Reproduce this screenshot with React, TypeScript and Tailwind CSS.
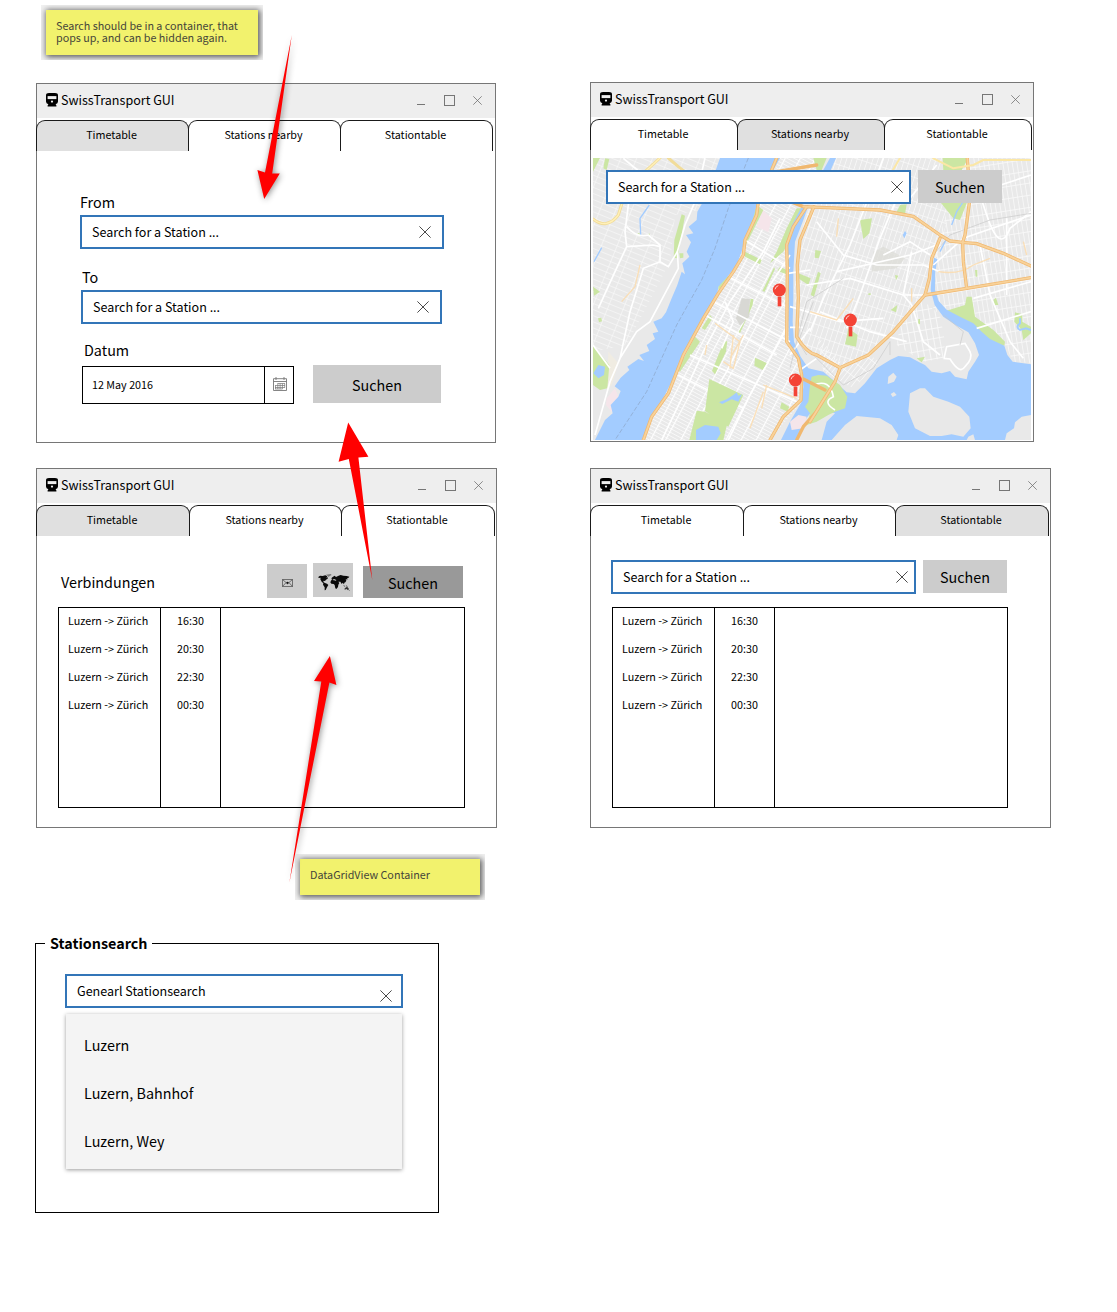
import type { ReactNode } from 'react';

const LINE = '#767676';

function Cross({ size, className = '' }: { size: number; className?: string }) {
  return (
    <svg width={size} height={size} viewBox="0 0 12 12" className={className}>
      <path d="M0.4 0.4L11.6 11.6M11.6 0.4L0.4 11.6" stroke="#4a4a4a" strokeWidth="1" fill="none" />
    </svg>
  );
}

function Train() {
  return (
    <svg width="12" height="14" viewBox="0 0 12 14" className="-mt-[2px]">
      <path d="M3 0H9Q12 0 12 2.4V8.6Q12 11 9.6 11.2L10.4 12.6V13.6H1.6V12.6L2.4 11.2Q0 11 0 8.6V2.4Q0 0 3 0Z" />
      <path d="M1.6 3.1H10.4V6.1H1.6Z" fill="#eeeeee" />
      <circle cx="6" cy="8.6" r="1.1" fill="#eeeeee" />
    </svg>
  );
}

function TitleBar() {
  return (
    <div className="flex h-[34px] items-center bg-[#eeeeee] pl-[9px] pr-[13px]">
      <Train />
      <span className="-mt-[2px] ml-[3px] text-[12.55px] leading-[34px]">SwissTransport GUI</span>
      <div className="-mt-[2px] ml-auto flex items-center">
        <svg width="8" height="12" viewBox="0 0 8 12">
          <path d="M0 10.5H8" stroke={LINE} />
        </svg>
        <svg width="11" height="11" viewBox="0 0 11 11" className="ml-[19px]">
          <rect x="0.5" y="0.5" width="10" height="10" stroke={LINE} fill="none" />
        </svg>
        <Cross size={9} className="ml-[18px] opacity-80" />
      </div>
    </div>
  );
}

const tabNames = ['Timetable', 'Stations nearby', 'Stationtable'];

function Tabs({ active, columns }: { active: number; columns: string }) {
  return (
    <div className={`-ml-px mt-[2px] grid h-[31px] ${columns}`}>
      {tabNames.map((name, i) => (
        <div
          key={name}
          className={`-mr-px rounded-t-[9px] border-x border-t border-[#1a1a1a] pr-[2px] text-center text-[10.75px] leading-[27px] ${
            i === active ? 'bg-[#e0e0e0]' : 'bg-white'
          }`}
        >
          {name}
        </div>
      ))}
    </div>
  );
}

function Window({
  className,
  active,
  columns,
  children,
}: {
  className: string;
  active: number;
  columns: string;
  children: ReactNode;
}) {
  return (
    <section className={`h-[360px] shrink-0 border border-[#767676] bg-white ${className}`}>
      <TitleBar />
      <Tabs active={active} columns={columns} />
      {children}
    </section>
  );
}

function SearchBox({
  className,
  text = 'Search for a Station ...',
  cross = '',
}: {
  className: string;
  text?: string;
  cross?: string;
}) {
  return (
    <div
      className={`flex h-[34px] items-center justify-between border-2 border-[#3275b8] bg-white pl-[10px] text-[12.55px] leading-[30px] ${className}`}
    >
      <span>{text}</span>
      <Cross size={12} className={`-mt-px ${cross}`} />
    </div>
  );
}

function Button({ className, children }: { className: string; children: ReactNode }) {
  return <div className={`flex items-center justify-center text-[14.35px] ${className}`}>{children}</div>;
}

function Note({ className, children }: { className: string; children: ReactNode }) {
  return (
    <div className={`overflow-hidden bg-[#f1f1f1] p-[5px] ${className}`}>
      <div className="h-full bg-[#f2f26d] pl-[10px] pt-[10px] text-[10.75px] leading-[12px] text-[#45453a] shadow-[1px_1px_6px_1px_rgba(0,0,0,0.65)]">
        {children}
      </div>
    </div>
  );
}

const times = ['16:30', '20:30', '22:30', '00:30'];

function Connections({ className }: { className: string }) {
  return (
    <div className={`grid h-[201px] grid-cols-[102px_60px_1fr] border border-black text-[10.75px] leading-[28px] ${className}`}>
      <div className="border-r border-black pl-[9px]">
        <div className="-mt-px">
          {times.map((t) => (
            <div key={t}>Luzern -&gt; Zürich</div>
          ))}
        </div>
      </div>
      <div className="border-r border-black text-center">
        <div className="-mt-px">
          {times.map((t) => (
            <div key={t}>{t}</div>
          ))}
        </div>
      </div>
      <div />
    </div>
  );
}

function Calendar() {
  return (
    <svg width="14" height="14" viewBox="0 0 14 14" fill="none" stroke="#777" strokeWidth="0.9" className="-mt-[2px] ml-px">
      <path d="M0.5 1.7H13.5V13.5H0.5ZM0.5 4.5H13.5M3 0V3M11 0V3" />
      <path d="M4.5 6.5H12M2 8.5H12M2 10.5H12M2 12H9.5M2.5 8.5V12M4.8 6.5V12M7.1 6.5V12M9.4 6.5V12M11.7 6.5V10.5" strokeWidth="0.7" />
    </svg>
  );
}

function Envelope() {
  return (
    <svg width="11" height="8" viewBox="0 0 11 8" fill="none" stroke="#333">
      <path d="M0.5 0.5H10.5V7.5H0.5ZM0.5 0.5L5.5 4.8L10.5 0.5M0.5 7.5L4 3.6M10.5 7.5L7 3.6" strokeWidth="0.6" />
      <circle cx="5.5" cy="3.8" r="1.1" fill="#111" stroke="none" />
    </svg>
  );
}

function WorldMap() {
  return (
    <svg width="32" height="17" viewBox="0 0 96 51" fill="#0a0a0a" className="ml-[2px]">
      <path d="M1 9L6 5L14 6L22 4L28 7L25 11L30 10L29 14L24 17L21 21L17 20L16 24L21 27L27 29L31 33L27 40L23 48L20 49L20 40L15 32L16 28L11 23L7 16L8 11L2 12Z" />
      <path d="M24 2L38 0L41 3L35 6L32 9L29 6Z" fill="#777" />
      <path d="M39 20L42 16L40 13L44 9L50 5L54 9L60 6L68 3L76 5L86 6L94 8L92 11L88 12L88 17L83 15L85 20L82 25L79 26L78 31L74 26L71 30L67 23L61 23L64 27L61 32L60 39L55 45L52 43L50 33L47 30L40 29L37 25Z" />
      <path d="M43 18L48 15L55 18L54 20L48 19Z" fill="#ccc" />
      <path d="M76 33L80 35L82 38L78 37ZM83 32L86 35L90 37L86 38ZM80 43L86 39L89 40L93 45L90 49L86 45L80 47ZM94 48L96 49L92 51Z" opacity="0.8" />
    </svg>
  );
}

/* City map: Hudson on the left, Manhattan in the middle, East River and bay on the right. */
function CityMap() {
  const pins = [
    [568, 405],
    [781, 495],
    [616, 675],
  ];
  return (
    <svg viewBox="9 9 1314 846" preserveAspectRatio="none" className="absolute inset-0 h-full w-full">
      <defs>
        <pattern id="jersey" width="44" height="17" patternUnits="userSpaceOnUse" patternTransform="rotate(22)">
          <path d="M0 1H44M1 0V17" stroke="#f8f8f8" strokeWidth="2.2" />
        </pattern>
        <pattern id="manhattan" width="40" height="10" patternUnits="userSpaceOnUse" patternTransform="rotate(28)">
          <path d="M0 1H40" stroke="#f9f9f9" strokeWidth="2.8" />
          <path d="M1 0V10" stroke="#fff" strokeWidth="5" />
        </pattern>
        <pattern id="bronx" width="15" height="34" patternUnits="userSpaceOnUse" patternTransform="rotate(18)">
          <path d="M0 1H15M1 0V34" stroke="#fafafa" strokeWidth="2.4" />
        </pattern>
        <pattern id="east" width="14" height="36" patternUnits="userSpaceOnUse" patternTransform="rotate(-9)">
          <path d="M0 1H14M1 0V36" stroke="#fbfbfb" strokeWidth="2.6" />
        </pattern>
        <pattern id="point" width="18" height="30" patternUnits="userSpaceOnUse" patternTransform="rotate(-10)">
          <path d="M0 1H18M1 0V30" stroke="#fafafa" strokeWidth="3" />
        </pattern>
        <pattern id="south" width="12" height="36" patternUnits="userSpaceOnUse" patternTransform="rotate(38)">
          <path d="M0 1H12M1 0V36" stroke="#fafafa" strokeWidth="2.4" />
        </pattern>
      </defs>
      <rect x="9" y="9" width="1314" height="846" fill="#e9e9e9" />

      {/* street grids */}
      <path d="M9 9H390L325 165L255 180L240 320L110 570L9 590Z" fill="url(#jersey)" />
      <path d="M570 9H700L600 200V560L635 640V740L540 855H155L240 690L370 440L490 190Z" fill="url(#manhattan)" />
      <path d="M720 9H1120L1060 240L1010 420L900 530L830 600L750 640L640 570L610 420L640 200Z" fill="url(#bronx)" />
      <path d="M1120 9H1323V330V625L1270 620L1240 560L1130 470H1030L1030 300Z" fill="url(#east)" />
      <path d="M990 430L1050 480L1065 560L1060 610L1000 620L920 570L930 510Z" fill="url(#point)" />
      <path d="M680 540L750 620L840 600L870 620L790 700L700 650Z" fill="url(#south)" />

      {/* faint districts */}
      <path d="M850 290L880 275L945 310L920 340L845 350Z" fill="#dcdcd6" opacity="0.7" />
      <path d="M518 165L545 190L535 232L500 215Z" fill="#f5e5ea" />
      <path d="M50 730L75 700L85 725L65 770L48 750Z" fill="#f5e5ea" />
      <path d="M55 590L85 625L65 690L50 700Z" fill="#f0ece2" />
      <path d="M455 430L480 432L478 485L450 512L438 490Z" fill="#d8d8d4" />

      {/* green areas */}
      <g fill="#cbe6a3">
        <path d="M9 9H30L9 50ZM45 10L58 12L50 45L40 40Z" />
        <path d="M275 178L285 182L262 310L251 308L253 255Z" />
        <path d="M9 570L58 630L52 700L30 705L9 690ZM9 395L30 410L12 422Z" />
        <path d="M24 490L34 488L36 499L27 502ZM140 238L148 233L150 242ZM172 240L178 235L180 242ZM268 295L280 295V308L270 310Z" />
        <path d="M495 608L532 625L518 645L493 632ZM465 290L515 315L510 328L465 305Z" />
        <path d="M552 337L517 408L524 410L555 342ZM482 432L490 432L488 450L450 535L446 530L475 480Z" />
        <path d="M402 560L412 558L408 590L375 658L366 648L385 600Z" />
        <path d="M385 385L400 360L425 368L385 405ZM500 150L520 165L465 275L470 235ZM360 480L368 490L345 525L335 520Z" />
        <path d="M315 545L330 560L270 650L262 645Z" />
        <path d="M620 160L640 160L615 225L580 290L540 325L560 290L590 220Z" />
        <path d="M575 742L598 755L592 770L570 760ZM570 335L590 345V358L562 348ZM625 355L662 370L655 390L628 372Z" />
        <path d="M810 195L846 190L838 235L820 252ZM662 420L684 350L692 355L672 425ZM676 285L693 288L686 310L674 308Z" />
        <path d="M1058 9H1135L1110 55L1060 50ZM1050 140H1132L1110 195L1090 190ZM930 150L950 148L945 178L920 170Z" />
        <path d="M1130 425H1145L1155 485L1210 525L1245 560L1243 572L1170 555L1140 510L1060 470L1125 450Z" />
        <path d="M775 520L803 540L798 575L765 568ZM902 465L922 450L918 472ZM1275 472L1297 478V500L1323 515V535L1300 555L1295 525L1273 500Z" />
        <path d="M1290 745L1310 735L1323 745V775L1300 778ZM980 610L1005 605L995 622ZM1155 345L1162 345V365H1157ZM1210 435L1218 428L1225 450H1214Z" />
        <path d="M985 492L990 492V508L984 506ZM835 415H842V420H835ZM915 360L925 362L918 376ZM670 9H710L695 45H680Z" />
      </g>

      {/* water */}
      <g fill="#a3ccff">
        <path d="M390 9H570L540 62L500 150L490 188L465 250L455 290L440 330L415 362L385 395L380 430L350 480L320 530L295 580L265 640L235 700L215 740L180 800L155 855H15L45 795L68 775L62 750L85 725L92 708L74 694L92 668L118 645L112 635L145 612L162 618L148 600L178 588L170 570L195 552L188 535L205 530L190 500L215 490L228 472L245 430L262 390L275 350L285 358L277 325L298 305L290 290L303 262L288 240L310 235L296 215L320 195L322 170L345 130L372 60Z" />
        <path d="M700 45L720 9H738L718 55ZM638 150H656L640 195L615 260L610 350V430L608 500L612 560L632 605L655 640L700 650L735 680L770 712L795 715L825 685L860 640L900 615L925 603L960 607L985 620L1005 630L1025 650L1055 655L1080 648L1095 665L1130 673L1135 650L1155 620L1167 600L1155 565L1135 532L1100 512L1060 485L1034 450L1022 405L1026 350L1032 308L1042 312L1036 350L1035 405L1046 438L1070 464L1110 485L1150 505L1175 530L1200 552L1243 572L1252 600L1268 620L1323 628V780L1295 785L1275 802L1272 820L1250 835L1245 855H573L600 800L635 740L640 695L638 650L620 610L597 570L595 500L596 430L590 350L590 270L603 215Z" />
        <path d="M10 655L25 630L45 635L42 660L25 670ZM938 240L945 228L950 235L943 250Z" />
      </g>
      <path d="M1290 490V505Q1275 515 1290 525L1308 520L1323 525" stroke="#a3ccff" strokeWidth="6" fill="none" />
      <path d="M152 240L150 190L178 150M12 320L35 278M1085 210L1100 170L1120 140M1070 250L1050 290" stroke="#a3ccff" strokeWidth="4" fill="none" />
      <path d="M475 9L415 160L375 280L335 375L260 510L170 710L75 855" stroke="#8ba3c4" strokeWidth="2" strokeDasharray="14 6" fill="none" />

      {/* islands */}
      <g fill="#e8e8e8">
        <path d="M960 715L990 700H1005L1030 725L1075 740L1110 755L1138 785L1142 820L1120 845L1085 838L1055 843H1020L975 820L955 770Z" />
        <path d="M895 665L910 653L920 665L912 680L893 687ZM902 717L912 711L920 720L908 726Z" />
        <path d="M725 855L765 810L800 783L870 790L905 810L925 840L920 855ZM1135 845L1150 838L1155 855H1130Z" />
        <path d="M665 770L720 770L735 775L710 800L695 855H620L640 800Z" />
      </g>
      <path d="M600 800L625 780L650 785L640 820L605 825Z" fill="#f5e5ea" />
      <path d="M660 690L665 665L685 660L710 662L750 690L772 725L765 760L735 770L715 780L680 800L650 810L660 775L645 755L655 740Z" fill="#cbe6a3" />

      {/* secondary streets */}
      <g stroke="#fff" fill="none" strokeWidth="5">
        <path d="M120 110L105 230L110 275L75 350L25 460M110 215Q140 250 175 240L210 270V320L235 335L262 290M210 275L190 270L110 275" />
        <path d="M345 9L315 140L285 210L262 290L265 340L220 425L180 500L140 530L90 610L60 680L15 840M210 320L160 340L120 470L90 610M9 570L60 640M100 10L160 60L345 85" />
        <path d="M570 190L520 290L420 440L340 590L280 720L215 855M600 300L540 390L410 650L320 800M590 520L480 720L415 855M405 440L430 500L395 580" />
        <path d="M465 255L600 340M370 440L600 560M345 480L560 600M300 600L620 740M415 365L590 455M265 660L460 760M600 600L660 520M595 355L660 345M600 455L670 475M600 517L640 517M630 645L680 610" />
        <path d="M880 9L835 130L780 270L700 430L660 530M950 60L870 250L810 420L770 520M1040 30L960 130M680 200L760 300L860 330L1000 330L1050 350M650 390L780 370L940 420L1010 420" />
        <path d="M740 350L960 300L1040 270M690 470L840 530L950 560M965 290L940 420L965 450M880 300L960 260L1020 300M650 470L750 500L880 490M1030 330L1120 250L1323 180M1040 100L1140 120L1323 60" />
        <path d="M1190 180Q1230 300 1260 220L1323 170M1190 180L1160 90L1120 60M1250 190V420M1170 270L1200 420L1260 560L1300 610M1150 430L1323 380M1160 520L1323 470" />
        <path d="M1060 610L1080 612Q1110 660 1125 635Q1150 610 1140 590L1125 565L1070 575L1062 610M965 450L1000 560L1050 600" />
        <path d="M670 690Q720 670 730 725Q695 740 735 765" />
      </g>
      <g stroke="#c9c9c9" fill="none" strokeWidth="2.5">
        <path d="M600 640L650 440L760 370M1323 175L1200 195L1080 240L1030 300M645 575L760 690L850 640L900 560V600M650 600L625 560L670 440M1060 480L1120 530L1110 570" opacity="0.8" />
      </g>
      <g stroke="#fbdcae" fill="none" strokeWidth="4" opacity="0.85">
        <path d="M150 330L135 395L95 440M375 505L450 560L430 640L400 620M430 540L420 640M520 690L620 730M520 710L480 820M530 690L515 760M745 190L740 245M660 470L740 495L790 430M965 400V440M1045 350Q1110 360 1150 330L1200 310M1300 260L1310 300M460 540L420 610M350 570L345 600" />
      </g>

      {/* Central Park */}
      <path d="M358 672L460 720L415 815L345 768ZM320 767L345 770L412 805L400 855H298Z" fill="#cbe6a3" />
      <path
        d="M318 825L345 810L385 815L392 835L380 855H318ZM387 742L410 733L430 720L440 712L445 722L456 718L445 740L425 733L397 747Z"
        fill="#a3ccff"
      />

      {/* motorways */}
      <g fill="none" strokeLinejoin="round" strokeLinecap="round">
        <path d="M9 192Q50 225 85 180L110 100L165 50L210 9M235 9L265 35L350 100" stroke="#f1dc9a" strokeWidth="9" />
        <path d="M9 192Q50 225 85 180L110 100L165 50L210 9" stroke="#fff0b8" strokeWidth="4" />
        <g stroke="#f0b870" strokeWidth="10">
          <path d="M560 9L505 140L500 180L465 255L460 300L430 350L385 415L340 490L280 600L235 715L185 785L160 855" />
          <path d="M650 155L610 215L590 270L592 350L590 560L625 610L635 660L633 735L580 785L540 855" />
          <path d="M672 155L630 255L622 330L625 430L620 545Q650 595 680 600L750 638" />
          <path d="M500 100L640 155L760 160L870 165L970 184L1050 240L1080 258L1118 262L1160 266L1240 295L1323 333" />
          <path d="M750 638L835 600L910 530L970 460L1005 420L1130 400L1323 368" />
          <path d="M1132 9L1140 130L1125 240L1118 262L1120 320L1130 400M1050 250L1025 310L1018 370L1005 420M750 640L735 680L710 720L660 800M640 672L705 705" />
          <path d="M620 855L640 815L675 775M520 100L560 50L680 30" />
        </g>
        <g stroke="#f8d29a" strokeWidth="5.5">
          <path d="M560 9L505 140L500 180L465 255L460 300L430 350L385 415L340 490L280 600L235 715L185 785L160 855" />
          <path d="M650 155L610 215L590 270L592 350L590 560L625 610L635 660L633 735L580 785L540 855" />
          <path d="M672 155L630 255L622 330L625 430L620 545Q650 595 680 600L750 638" />
          <path d="M640 155L760 160L870 165L970 184L1050 240L1080 258L1118 262L1160 266L1240 295L1323 333" />
          <path d="M750 638L835 600L910 530L970 460L1005 420L1130 400L1323 368M1132 9L1140 130L1125 240L1118 262L1120 320L1130 400M1050 250L1025 310L1018 370L1005 420M750 640L735 680L710 720L660 800" />
        </g>
        <path d="M1030 10L1090 40L1150 30L1180 15H1323M930 9L900 60" stroke="#fbe7a6" strokeWidth="6" />
      </g>

      {pins.map(([x, y]) => (
        <g key={x}>
          <rect x={x - 5} y={y + 20} width="11" height="29" fill="#f44336" />
          <circle cx={x} cy={y} r="19.5" fill="#f44336" />
          <path d={`M${x - 13} ${y - 2}Q${x - 11} ${y - 11} ${x - 3} ${y - 13}`} stroke="#ffd0cc" strokeWidth="3" fill="none" />
        </g>
      ))}
    </svg>
  );
}

function Arrows() {
  return (
    <svg width="1117" height="1312" viewBox="0 0 1117 1312" className="pointer-events-none absolute left-0 top-0" fill="#ff0000">
      <path
        d="M291.8 35L272.2 173.4L279.8 173.4L264.2 199L257.4 170L265 172.4Z"
        className="drop-shadow-[1px_1px_3px_rgba(0,0,0,0.45)]"
      />
      <path d="M372.3 580L348.8 459L338.6 461.8L348.2 422.5L368.4 456.8L358.4 457.6Z" />
      <path
        d="M289.3 883L321.3 681.4L314 681L329.9 656L336.4 685L329.4 682.4Z"
        className="drop-shadow-[1px_1px_3px_rgba(0,0,0,0.45)]"
      />
    </svg>
  );
}

export default function App() {
  return (
    <main className="relative flex h-[1312px] w-[1117px] flex-col overflow-hidden bg-white pt-[5px] font-['Noto_Sans_CJK_SC','Noto_Sans',sans-serif] text-black">
      <Note className="ml-[41px] h-[55px] w-[222px] shrink-0">
        Search should be in a container, that pops up, and can be hidden again.
      </Note>

      <div className="mt-[22px] flex shrink-0 pl-[36px]">
        <Window className="mt-px w-[460px]" active={0} columns="grid-cols-[152px_152px_152px]">
          <div className="pl-[43px] pt-[39px]">
            <div className="mb-px text-[14.35px] leading-[24px]">From</div>
            <SearchBox className="w-[364px] pr-[11px]" />
            <div className="mb-px ml-[2px] mt-[16px] text-[14.35px] leading-[24px]">To</div>
            <SearchBox className="ml-px w-[361px] pr-[11px]" />
            <div className="mb-px ml-[4px] mt-[14px] text-[14.35px] leading-[24px]">Datum</div>
            <div className="flex pl-[2px] pt-[2px]">
              <div className="mt-px flex h-[38px] w-[212px] border border-black">
                <div className="flex-1 pl-[9px] text-[10.75px] leading-[36px]">12 May 2016</div>
                <div className="flex w-[29px] items-center justify-center border-l border-black">
                  <Calendar />
                </div>
              </div>
              <Button className="ml-[19px] h-[38px] w-[128px] bg-[#cccccc] pt-[2px]">Suchen</Button>
            </div>
          </div>
        </Window>

        <Window className="ml-[94px] w-[444px]" active={1} columns="grid-cols-[147px_147px_147px]">
          <div className="relative ml-[2px] mt-[8px] h-[282px] w-[438px] overflow-hidden">
            <CityMap />
            <div className="relative flex pl-[13px] pt-[12px]">
              <SearchBox className="w-[305px] pr-[6px]" />
              <Button className="ml-[7px] h-[33px] w-[84px] bg-[#cccccc]">Suchen</Button>
            </div>
          </div>
        </Window>
      </div>

      <div className="mt-[25px] flex shrink-0 pl-[36px]">
        <Window className="w-[461px]" active={0} columns="grid-cols-[153px_152px_153px]">
          <div className="mt-[27px] flex h-[44px] items-start pl-[24px]">
            <div className="w-[206px] pt-[7px] text-[14.35px] leading-[24px]">Verbindungen</div>
            <Button className="mt-px h-[34px] w-[40px] bg-[#cccccc] pt-[3px]">
              <Envelope />
            </Button>
            <Button className="ml-[6px] h-[34px] w-[40px] bg-[#cccccc] pt-[4px]">
              <WorldMap />
            </Button>
            <Button className="ml-[10px] mt-[3px] h-[32px] w-[100px] bg-[#999999] pt-[2px]">Suchen</Button>
          </div>
          <Connections className="ml-[21px] w-[407px]" />
        </Window>

        <Window className="ml-[93px] w-[461px]" active={2} columns="grid-cols-[153px_152px_153px]">
          <div className="mt-[24px] flex h-[47px] items-start pl-[20px]">
            <SearchBox className="w-[305px] pr-[6px]" />
            <Button className="ml-[7px] h-[33px] w-[84px] bg-[#cccccc]">Suchen</Button>
          </div>
          <Connections className="ml-[21px] w-[396px]" />
        </Window>
      </div>

      <Note className="ml-[295px] mt-[26px] h-[46px] w-[190px] shrink-0">DataGridView Container</Note>

      <section className="ml-[35px] mt-[43px] h-[270px] w-[404px] shrink-0 border border-black">
        <h2 className="-mt-[13px] ml-[9px] w-[107px] bg-white pl-[5px] text-[14.35px] font-bold leading-[24px]">
          Stationsearch
        </h2>
        <SearchBox className="ml-[29px] mt-[19px] w-[338px] pr-[9px]" text="Genearl Stationsearch" cross="translate-y-[5px]" />
        <ul className="ml-[30px] mt-[6px] h-[155px] w-[336px] bg-[#f4f4f4] pl-[18px] pt-[7px] text-[14.35px] leading-[48px] shadow-[0_1px_4px_rgba(0,0,0,0.4)]">
          <li>Luzern</li>
          <li>Luzern, Bahnhof</li>
          <li>Luzern, Wey</li>
        </ul>
      </section>

      <Arrows />
    </main>
  );
}
